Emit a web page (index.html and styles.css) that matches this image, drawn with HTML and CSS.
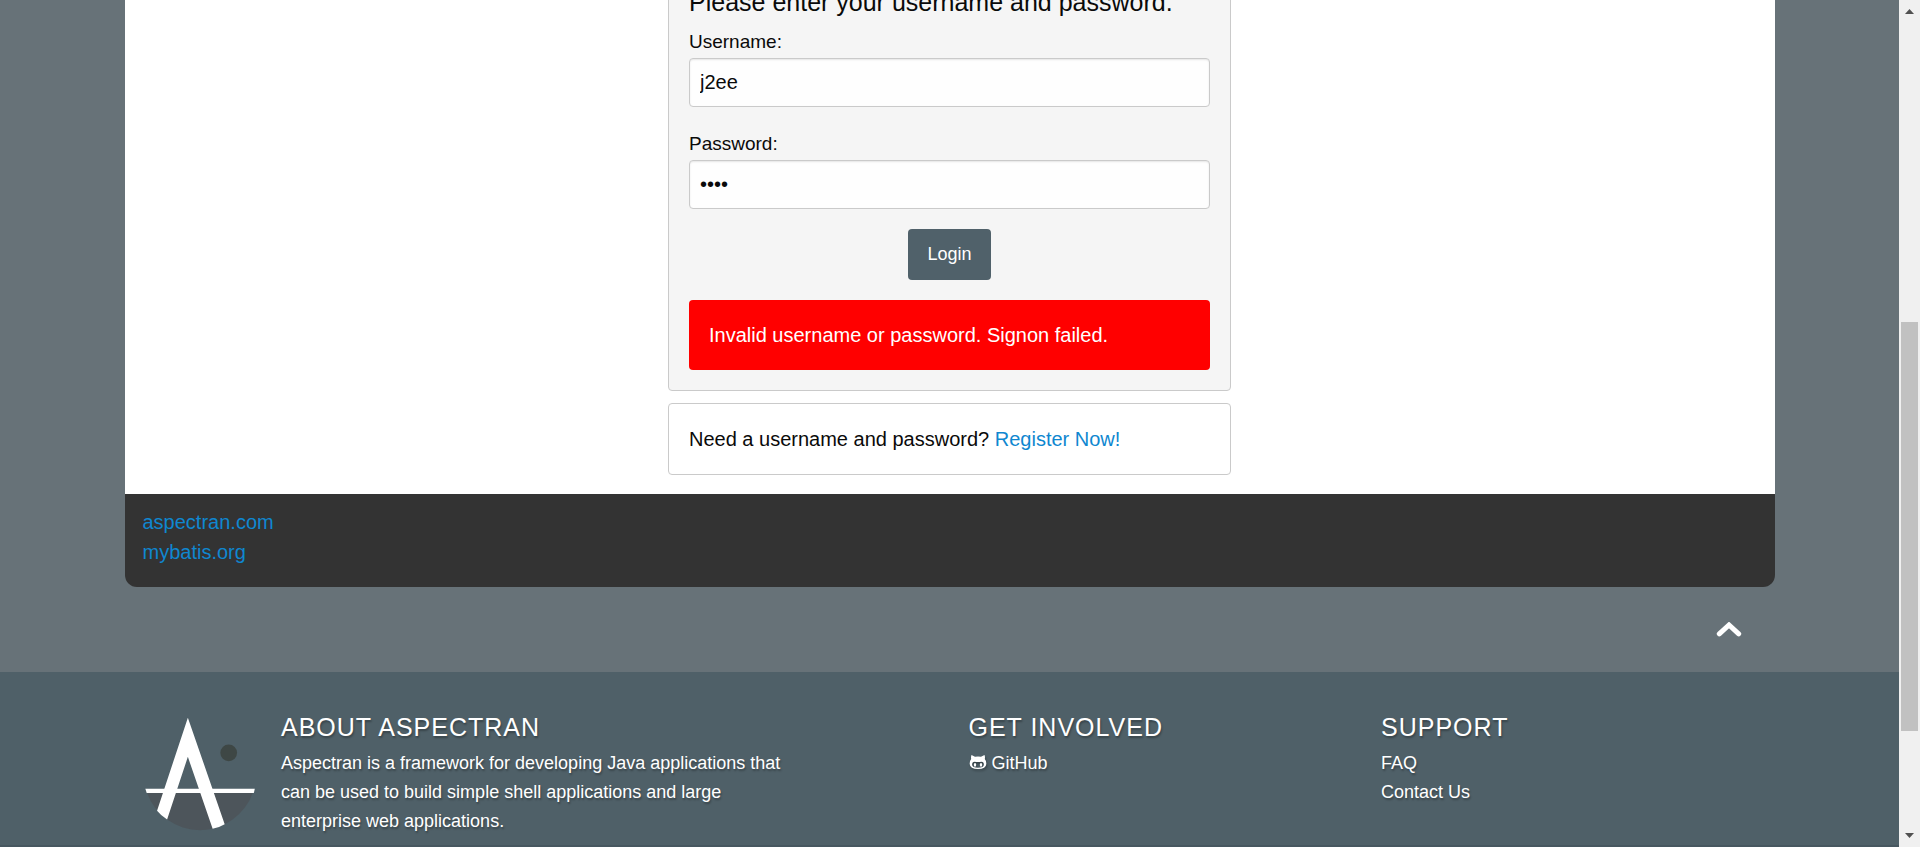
FILE: index.html
```html
<!DOCTYPE html>
<html lang="en">
<head>
<meta charset="utf-8">
<title>JPetStore Demo - Sign on</title>
<link rel="stylesheet" href="styles.css">
</head>
<body>
<div class="window">
  <div class="page">
    <div class="container">
      <main class="content">
        <form class="card card-login">
          <h3 class="login-title">Please enter your username and password.</h3>
          <label class="field-label" for="username">Username:</label>
          <input class="field" id="username" type="text" value="j2ee">
          <label class="field-label" for="password">Password:</label>
          <input class="field" id="password" type="password" value="j2ee">
          <button class="login-button" type="button">Login</button>
          <div class="alert" role="alert">Invalid username or password. Signon failed.</div>
        </form>
        <div class="card card-register">Need a username and password? <a href="#">Register Now!</a></div>
      </main>
      <nav class="site-links">
        <a href="#">aspectran.com</a>
        <a href="#">mybatis.org</a>
      </nav>
      <div class="top-row">
        <a class="go-top" href="#" aria-label="Back to top">
          <svg width="26" height="16" viewBox="0 0 26 16"><path d="M3.3 11.8 13 3 22.7 11.8" fill="none" stroke="#fff" stroke-width="5" stroke-linecap="round"/></svg>
        </a>
      </div>
    </div>
    <footer class="footer">
      <div class="footer-grid">
        <div class="logo">
          <svg viewBox="0 0 330 340" role="img" aria-label="Aspectran">
            <path d="M6 226A167.500 167.500 0 0 0 322 226Z" fill="#4d555b"/>
            <circle cx="250" cy="107" r="25" fill="#3e4745"/>
            <path d="M1 214H328L325 227H5Z" fill="#fff"/>
            <path d="M128 2 238 320Q221 330 202 334L128 119 66 306Q48 295 36 280Z" fill="#fff"/>
          </svg>
        </div>
        <section class="about">
          <h2>About Aspectran</h2>
          <p>Aspectran is a framework for developing Java applications that can be used to build simple shell applications and large enterprise web applications.</p>
        </section>
        <section class="column">
          <h2>Get Involved</h2>
          <ul>
            <li><a href="#"><svg class="github" width="18" height="14" viewBox="0 0 17 14"><path fill="#fff" fill-rule="evenodd" d="M2 0 5.5 1.7Q8.5 1.1 11.5 1.7L15 0Q15.8 2 15.3 4 17 6 16.8 9 16.5 14 8.500 14 .5 14 .2 9 0 6 1.700 4 1.200 2 2 0ZM5 6.800Q2.600 7 2.600 9.800 2.700 12.800 8.500 12.800 14.300 12.800 14.400 9.800 14.400 7 12 6.800 8.500 7.200 5 6.800Z"/><ellipse cx="5.500" cy="9.800" rx="1.200" ry="1.900" fill="#fff"/><ellipse cx="11.500" cy="9.800" rx="1.200" ry="1.900" fill="#fff"/></svg> GitHub</a></li>
          </ul>
        </section>
        <section class="column">
          <h2>Support</h2>
          <ul>
            <li><a href="#">FAQ</a></li>
            <li><a href="#">Contact Us</a></li>
          </ul>
        </section>
      </div>
    </footer>
  </div>
  <div class="scrollbar" aria-hidden="true">
    <svg width="9" height="5" viewBox="0 0 9 5"><path d="M0 5 4.500 0 9 5Z" fill="#505050"/></svg>
    <div class="track"><div class="thumb"></div></div>
    <svg width="9" height="5" viewBox="0 0 9 5"><path d="M0 0H9L4.500 5Z" fill="#505050"/></svg>
  </div>
</div>
</body>
</html>
```
FILE: styles.css
```css
* { box-sizing: border-box; }

body {
  margin: 0;
  overflow: hidden;
  font-family: "Liberation Sans", Arial, sans-serif;
  font-size: 20px;
  line-height: 30px;
  color: #0a0a0a;
  background: #677278;
}

a { color: #0f87d0; text-decoration: none; }

.window { display: flex; height: 100vh; overflow: hidden; }

.page { flex: 1; display: flex; flex-direction: column; }

.container { width: 100%; max-width: 1650px; margin: 0 auto; }

.content {
  display: flex;
  flex-direction: column;
  align-items: center;
  gap: 12px;
  padding-bottom: 19px;
  background: #fff;
}

.card {
  width: 100%;
  max-width: 563px;
  padding: 20px;
  border: 1px solid #cacaca;
  border-radius: 4px;
  background: #fff;
}

.card-login {
  display: flex;
  flex-direction: column;
  margin-top: -36px;
  background: #f5f5f5;
}

.login-title {
  margin: 0 0 6px;
  font-size: 25px;
  font-weight: 400;
  line-height: 34px;
}

.field-label { font-size: 19px; line-height: 33px; }

.field {
  width: 100%;
  height: 49px;
  margin: 0 0 20px;
  padding: 0 10px;
  border: 1px solid #cacaca;
  border-radius: 4px;
  background: #fefefe;
  box-shadow: inset 0 1px 2px rgba(10, 10, 10, 0.1);
  color: #0a0a0a;
  font: inherit;
}

.login-button {
  align-self: center;
  margin: 0 0 20px;
  padding: 16px 19px;
  border: 0;
  border-radius: 4px;
  background: #50616a;
  color: #fff;
  font-family: inherit;
  font-size: 18px;
  line-height: 19px;
}

.alert {
  padding: 20px;
  border-radius: 4px;
  background: #f00;
  color: #fff;
}

.site-links {
  display: flex;
  flex-direction: column;
  align-items: flex-start;
  padding: 13px 18px 20px;
  border-radius: 0 0 12px 12px;
  background: #333;
}

.top-row {
  display: flex;
  justify-content: flex-end;
  padding: 35px 33px 34px;
}

.go-top { display: flex; }

.footer {
  flex: 1;
  border-bottom: 2px solid #475760;
  background: #4f6068;
  color: #fff;
  font-size: 18px;
  line-height: 29px;
  text-shadow: 1px 2px 2px rgba(0, 0, 0, 0.3);
}

.footer-grid {
  display: grid;
  grid-template-columns: 1fr 5fr 3fr 3fr;
  max-width: 1650px;
  margin: 0 auto;
  padding-top: 37px;
}

.logo { padding: 8px 7px 0 20px; }
.logo svg { display: block; width: 100%; }

.about { padding: 0 155px 0 19px; }
.column { padding: 0 19px; }

.footer h2 {
  margin: 0 0 4px;
  font-size: 25px;
  font-weight: 400;
  line-height: 36px;
  letter-spacing: 1px;
  text-transform: uppercase;
}

.footer p, .footer ul { margin: 0; padding: 0; list-style: none; }
.footer a { color: #fff; }
.github { filter: drop-shadow(1px 2px 1px rgba(0, 0, 0, 0.3)); }

.scrollbar {
  display: flex;
  flex-direction: column;
  align-items: center;
  width: 21px;
  padding: 9px 0;
  background: #f0f0f0;
}

.track {
  display: flex;
  flex-direction: column;
  flex: 1;
  width: 17px;
  padding: 308px 0 102px;
}

.thumb { flex: 1; background: #c1c1c1; }
```
